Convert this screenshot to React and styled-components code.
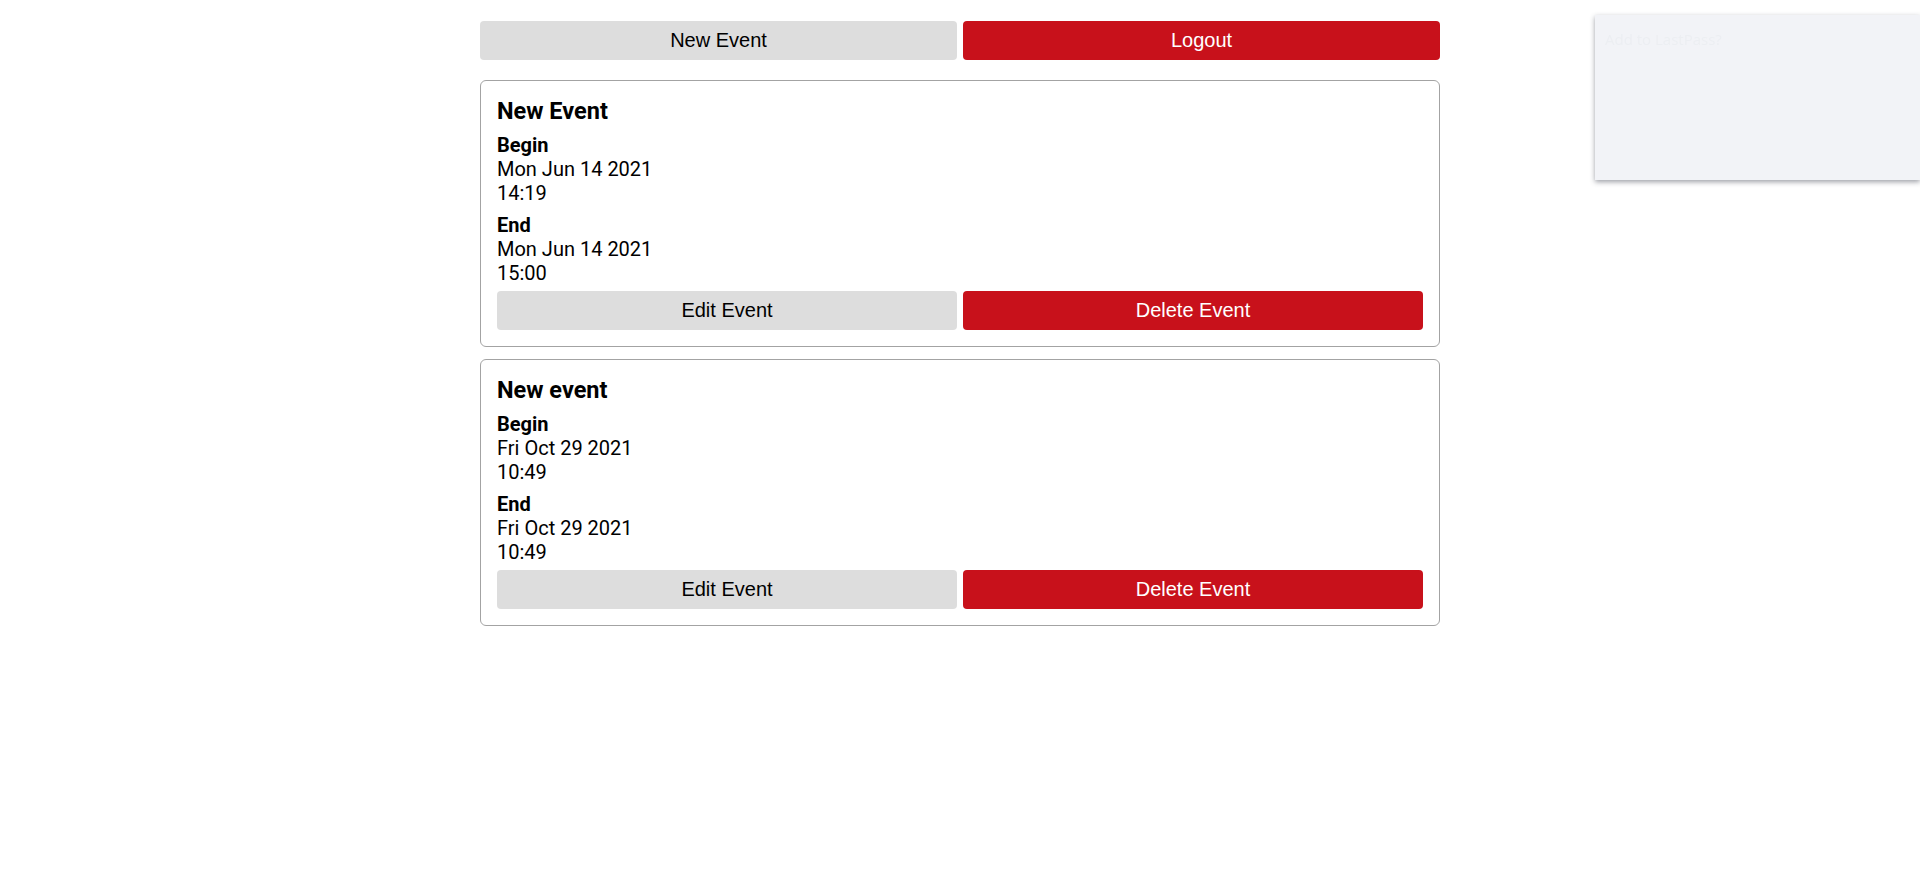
import React from "react";
import styled, { createGlobalStyle } from "styled-components";

const GlobalStyle = createGlobalStyle`
  html, body {
    margin: 0;
    padding: 0;
    background: #ffffff;
  }
  body {
    font-family: Roboto, "Liberation Sans", sans-serif;
    color: #000000;
  }
`;

const Page = styled.div`
  width: 960px;
  margin: 0 auto;
  padding-top: 21px;
  display: flex;
  flex-direction: column;
`;

const Toolbar = styled.div`
  display: grid;
  grid-template-columns: 1fr 1fr;
  gap: 6px;
  margin-bottom: 20px;
`;

const Button = styled.button`
  height: 39px;
  border: none;
  border-radius: 4px;
  padding: 0 8px;
  font-family: "Liberation Sans", Arial, sans-serif;
  font-size: 20px;
  cursor: pointer;
  background: ${(p) => (p.$danger ? "#c8111b" : "#dddddd")};
  color: ${(p) => (p.$danger ? "#ffffff" : "#000000")};
`;

const List = styled.div`
  display: flex;
  flex-direction: column;
  gap: 12px;
`;

const Card = styled.div`
  border: 1px solid #a3a3a3;
  border-radius: 6px;
  padding: 16px;
  display: flex;
  flex-direction: column;
`;

const Title = styled.div`
  font-family: Roboto, sans-serif;
  font-size: 23.5px;
  font-weight: 700;
  line-height: 29px;
  margin-bottom: 7px;
`;

const Group = styled.div`
  display: flex;
  flex-direction: column;
  font-size: 20px;
  line-height: 24px;
  margin-bottom: ${(p) => p.$space}px;
`;

const Label = styled.span`
  font-weight: 700;
`;

const Value = styled.span`
  font-weight: 400;
`;

const Actions = styled.div`
  display: grid;
  grid-template-columns: 1fr 1fr;
  gap: 6px;
`;

const Popup = styled.div`
  position: fixed;
  top: 15px;
  left: 1595px;
  right: 0;
  height: 165px;
  background: #f2f3f7;
  box-shadow: 0 2px 5px rgba(40, 45, 60, 0.45);
  padding: 14px 10px;
  box-sizing: border-box;
`;

const PopupText = styled.div`
  font-family: "Open Sans", sans-serif;
  font-size: 15px;
  color: #eceef2;
`;

const events = [
  { title: "New Event", begin: ["Mon Jun 14 2021", "14:19"], end: ["Mon Jun 14 2021", "15:00"] },
  { title: "New event", begin: ["Fri Oct 29 2021", "10:49"], end: ["Fri Oct 29 2021", "10:49"] },
];

export default function App() {
  return (
    <>
      <GlobalStyle />
      <Page>
        <Toolbar>
          <Button>New Event</Button>
          <Button $danger>Logout</Button>
        </Toolbar>
        <List>
          {events.map((e, i) => (
            <Card key={i}>
              <Title>{e.title}</Title>
              <Group $space={8}>
                <Label>Begin</Label>
                <Value>{e.begin[0]}</Value>
                <Value>{e.begin[1]}</Value>
              </Group>
              <Group $space={6}>
                <Label>End</Label>
                <Value>{e.end[0]}</Value>
                <Value>{e.end[1]}</Value>
              </Group>
              <Actions>
                <Button>Edit Event</Button>
                <Button $danger>Delete Event</Button>
              </Actions>
            </Card>
          ))}
        </List>
      </Page>
      <Popup>
        <PopupText>Add to LastPass?</PopupText>
      </Popup>
    </>
  );
}
